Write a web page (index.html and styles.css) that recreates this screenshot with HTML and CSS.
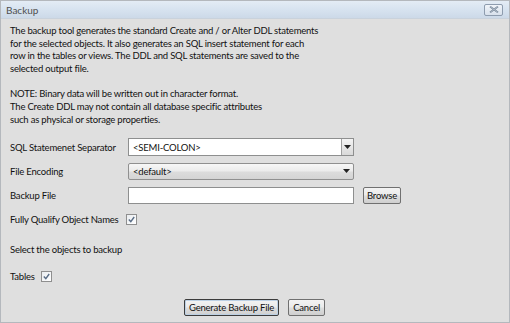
FILE: index.html
```html
<!DOCTYPE html>
<html lang="en">
<head>
    <meta charset="UTF-8">
    <meta name="viewport" content="width=device-width, initial-scale=1.0">
    <title>Backup</title>
    <link rel="stylesheet" href="styles.css">
</head>
<body>
    <div class="window">
        <div class="titlebar">
            <span class="title">Backup</span>
            <button type="button" class="close-btn" aria-label="Close">
                <svg width="10" height="7" viewBox="0 0 10 7">
                    <path d="M1 0.5 L9 6.5 M9 0.5 L1 6.5" stroke="#6c7c90" stroke-width="1.6" fill="none"/>
                    <path d="M1 0.5 L9 6.5 M9 0.5 L1 6.5" stroke="#e8eef5" stroke-width="0.5" fill="none"/>
                </svg>
            </button>
        </div>

        <div class="content">
            <p class="intro">
                The backup tool generates the standard Create and / or Alter DDL statements<br>
                for the selected objects. It also generates an SQL insert statement for each<br>
                row in the tables or views. The DDL and SQL statements are saved to the<br>
                selected output file.
            </p>
            <p class="intro note">
                NOTE: Binary data will be written out in character format.<br>
                The Create DDL may not contain all database specific attributes<br>
                such as physical or storage properties.
            </p>

            <div class="form-grid">
                <label class="field-label">SQL Statemenet Separator</label>
                <div class="combo editable">
                    <span class="combo-text">&lt;SEMI-COLON&gt;</span>
                    <span class="combo-btn">
                        <svg width="7" height="4" viewBox="0 0 7 4"><path d="M0 0 H7 L3.5 4 Z" fill="#222"/></svg>
                    </span>
                </div>
                <div></div>

                <label class="field-label">File Encoding</label>
                <div class="combo readonly">
                    <span class="combo-text">&lt;default&gt;</span>
                    <span class="combo-arrow">
                        <svg width="7" height="4" viewBox="0 0 7 4"><path d="M0 0 H7 L3.5 4 Z" fill="#222"/></svg>
                    </span>
                </div>
                <div></div>

                <label class="field-label">Backup File</label>
                <input type="text" class="text-field">
                <div><button type="button" class="btn">Browse</button></div>

                <div class="check-row span-all">
                    <span>Fully Qualify Object Names</span>
                    <span class="checkbox">
                        <svg width="7" height="7" viewBox="0 0 7 7"><path d="M0.8 3.6 L2.8 5.6 L6.2 1" stroke="#5a6d86" stroke-width="1.4" fill="none"/></svg>
                    </span>
                </div>
            </div>

            <p class="section-label">Select the objects to backup</p>

            <div class="check-row tables-row">
                <span>Tables</span>
                <span class="checkbox">
                    <svg width="7" height="7" viewBox="0 0 7 7"><path d="M0.8 3.6 L2.8 5.6 L6.2 1" stroke="#5a6d86" stroke-width="1.4" fill="none"/></svg>
                </span>
            </div>

            <div class="actions">
                <button type="button" class="btn default">Generate Backup File</button>
                <button type="button" class="btn">Cancel</button>
            </div>
        </div>
    </div>
</body>
</html>
```

FILE: styles.css
```css
body {
    margin: 0;
    padding: 0;
    font-family: "Lato", "Open Sans", sans-serif;
    font-size: 9.5px;
    letter-spacing: -0.2px;
    color: #111111;
    background-color: #ffffff;
}

.window {
    width: 508px;
    height: 321px;
    border: 1px solid #b4b8bd;
    background-color: #dfdfdf;
    display: flex;
    flex-direction: column;
}

.titlebar {
    height: 17px;
    display: flex;
    align-items: center;
    justify-content: space-between;
    padding: 0 5px 0 5px;
    background: linear-gradient(to bottom, #e4ecf5 0%, #d6e2ef 55%, #ccd9e8 100%);
    border-bottom: 1px solid #c9d2dc;
}

.title {
    color: #4f4f4f;
    font-size: 10px;
    letter-spacing: 0;
}

.close-btn {
    width: 19px;
    height: 12px;
    padding: 0;
    margin-right: 1px;
    border: 1px solid #8e9cae;
    border-radius: 2px;
    background: linear-gradient(to bottom, #f0f4f9, #d8e1ec);
    display: flex;
    align-items: center;
    justify-content: center;
}

.content {
    padding: 6px 10px 0 9px;
}

.intro {
    margin: 0;
    line-height: 12.6px;
}

.note {
    margin-top: 13px;
}

.form-grid {
    display: grid;
    grid-template-columns: 118px 226px auto;
    grid-auto-rows: 24px;
    align-items: center;
    margin-top: 9px;
}

.field-label {
    white-space: nowrap;
}

.span-all {
    grid-column: 1 / 4;
}

.combo {
    height: 18px;
    box-sizing: border-box;
    border: 1px solid #8e8f8f;
    display: flex;
    align-items: center;
    justify-content: space-between;
}

.combo-text {
    padding-left: 4px;
}

.editable {
    background-color: #ffffff;
}

.combo-btn {
    width: 12px;
    height: 16px;
    box-sizing: border-box;
    border-left: 1px solid #a0a0a0;
    background: linear-gradient(to bottom, #f4f4f4, #d9d9d9);
    display: flex;
    align-items: center;
    justify-content: center;
}

.readonly {
    height: 17px;
    border-color: #909090;
    border-radius: 2px;
    background: linear-gradient(to bottom, #f7f7f7 0%, #ececec 45%, #dcdcdc 55%, #d4d4d4 100%);
}

.combo-arrow {
    width: 14px;
    display: flex;
    justify-content: center;
}

.text-field {
    height: 17px;
    box-sizing: border-box;
    width: 100%;
    border: 1px solid #8e8f8f;
    background-color: #ffffff;
    margin: 0;
}

.btn {
    font-family: "Lato", "Open Sans", sans-serif;
    font-size: 9.5px;
    letter-spacing: -0.2px;
    color: #111111;
    height: 17px;
    padding: 0 4px;
    border: 1px solid #707070;
    border-radius: 2px;
    background: linear-gradient(to bottom, #f3f3f3 0%, #ebebeb 45%, #dddddd 55%, #cfcfcf 100%);
}

.form-grid .btn {
    margin-left: 9px;
    width: 38px;
    padding: 0;
}

.check-row {
    display: flex;
    align-items: center;
    gap: 8px;
}

.checkbox {
    width: 11px;
    height: 11px;
    box-sizing: border-box;
    border: 1px solid #8f8f8f;
    background: linear-gradient(to bottom right, #e9ecef, #ffffff);
    display: flex;
    align-items: center;
    justify-content: center;
}

.section-label {
    margin: 13px 0 0 0;
    line-height: 12.6px;
}

.tables-row {
    height: 14px;
    margin-top: 13px;
    gap: 6px;
}

.actions {
    display: flex;
    justify-content: center;
    gap: 9px;
    margin-top: 15px;
}

.btn.default {
    border-color: #3c3c3c;
    box-shadow: inset 0 0 0 1px #bcd0e4;
    padding: 0 4px;
}
```
